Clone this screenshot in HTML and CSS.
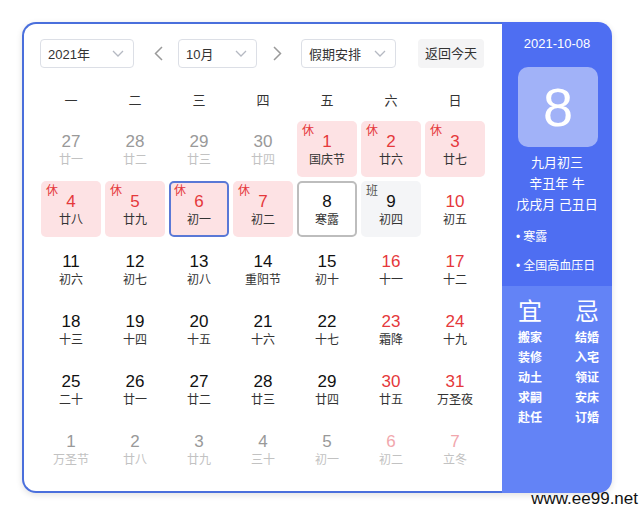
FILE: index.html
```html
<!DOCTYPE html>
<html lang="zh-CN">
<head>
<meta charset="utf-8">
<title>万年历</title>
<link rel="stylesheet" href="styles.css">
</head>
<body>
<div class="page">
  <div class="calendar">
    <div class="main">
      <div class="toolbar">
        <div class="select sel-year"><span>2021年</span><svg class="chev" width="12" height="7" viewBox="0 0 12 7"><polyline points="1,1 6,6 11,1" fill="none" stroke="#b5b9c2" stroke-width="1.3"/></svg></div>
        <div class="arrow arrow-l"><svg width="9" height="15" viewBox="0 0 9 15"><polyline points="8,1 1.5,7.5 8,14" fill="none" stroke="#9a9a9a" stroke-width="1.5"/></svg></div>
        <div class="select sel-month"><span>10月</span><svg class="chev" width="12" height="7" viewBox="0 0 12 7"><polyline points="1,1 6,6 11,1" fill="none" stroke="#b5b9c2" stroke-width="1.3"/></svg></div>
        <div class="arrow arrow-r"><svg width="9" height="15" viewBox="0 0 9 15"><polyline points="1,1 7.5,7.5 1,14" fill="none" stroke="#9a9a9a" stroke-width="1.5"/></svg></div>
        <div class="select sel-hol"><span>假期安排</span><svg class="chev" width="12" height="7" viewBox="0 0 12 7"><polyline points="1,1 6,6 11,1" fill="none" stroke="#b5b9c2" stroke-width="1.3"/></svg></div>
        <div class="today-btn">返回今天</div>
      </div>
      <div class="weekdays">
        <span>一</span><span>二</span><span>三</span><span>四</span><span>五</span><span>六</span><span>日</span>
      </div>
      <div class="grid">
        <div class="cell other"><b>27</b><i>廿一</i></div>
        <div class="cell other"><b>28</b><i>廿二</i></div>
        <div class="cell other"><b>29</b><i>廿三</i></div>
        <div class="cell other"><b>30</b><i>廿四</i></div>
        <div class="cell hol"><em>休</em><b>1</b><i>国庆节</i></div>
        <div class="cell hol"><em>休</em><b>2</b><i>廿六</i></div>
        <div class="cell hol"><em>休</em><b>3</b><i>廿七</i></div>

        <div class="cell hol"><em>休</em><b>4</b><i>廿八</i></div>
        <div class="cell hol"><em>休</em><b>5</b><i>廿九</i></div>
        <div class="cell hol sel"><em>休</em><b>6</b><i>初一</i></div>
        <div class="cell hol"><em>休</em><b>7</b><i>初二</i></div>
        <div class="cell today"><b>8</b><i>寒露</i></div>
        <div class="cell work"><em>班</em><b>9</b><i>初四</i></div>
        <div class="cell wk"><b>10</b><i>初五</i></div>

        <div class="cell"><b>11</b><i>初六</i></div>
        <div class="cell"><b>12</b><i>初七</i></div>
        <div class="cell"><b>13</b><i>初八</i></div>
        <div class="cell"><b>14</b><i>重阳节</i></div>
        <div class="cell"><b>15</b><i>初十</i></div>
        <div class="cell wk"><b>16</b><i>十一</i></div>
        <div class="cell wk"><b>17</b><i>十二</i></div>

        <div class="cell"><b>18</b><i>十三</i></div>
        <div class="cell"><b>19</b><i>十四</i></div>
        <div class="cell"><b>20</b><i>十五</i></div>
        <div class="cell"><b>21</b><i>十六</i></div>
        <div class="cell"><b>22</b><i>十七</i></div>
        <div class="cell wk"><b>23</b><i>霜降</i></div>
        <div class="cell wk"><b>24</b><i>十九</i></div>

        <div class="cell"><b>25</b><i>二十</i></div>
        <div class="cell"><b>26</b><i>廿一</i></div>
        <div class="cell"><b>27</b><i>廿二</i></div>
        <div class="cell"><b>28</b><i>廿三</i></div>
        <div class="cell"><b>29</b><i>廿四</i></div>
        <div class="cell wk"><b>30</b><i>廿五</i></div>
        <div class="cell wk"><b>31</b><i>万圣夜</i></div>

        <div class="cell other"><b>1</b><i>万圣节</i></div>
        <div class="cell other"><b>2</b><i>廿八</i></div>
        <div class="cell other"><b>3</b><i>廿九</i></div>
        <div class="cell other"><b>4</b><i>三十</i></div>
        <div class="cell other"><b>5</b><i>初一</i></div>
        <div class="cell other wk"><b>6</b><i>初二</i></div>
        <div class="cell other wk"><b>7</b><i>立冬</i></div>
      </div>
    </div>
    <div class="panel">
      <div class="panel-top">
        <div class="p-date">2021-10-08</div>
        <div class="p-day">8</div>
        <div class="p-lunar">九月初三</div>
        <div class="p-lunar">辛丑年 牛</div>
        <div class="p-lunar">戊戌月 己丑日</div>
        <ul class="p-events">
          <li>寒露</li>
          <li>全国高血压日</li>
        </ul>
      </div>
      <div class="panel-bottom">
        <div class="yj">
          <div class="yj-col">
            <div class="yj-title">宜</div>
            <div>搬家</div><div>装修</div><div>动土</div><div>求嗣</div><div>赴任</div>
          </div>
          <div class="yj-col">
            <div class="yj-title">忌</div>
            <div>结婚</div><div>入宅</div><div>领证</div><div>安床</div><div>订婚</div>
          </div>
        </div>
      </div>
    </div>
  </div>
  <div class="watermark">www.ee99.net</div>
</div>
</body>
</html>
```

FILE: styles.css
```css
* { box-sizing: border-box; }
html, body { margin: 0; padding: 0; background: #fff; }
body {
  font-family: "Liberation Sans", "Noto Sans CJK SC", sans-serif;
  color: #333;
}
.page {
  position: relative;
  width: 643px;
  height: 511px;
  padding: 22px 0 0 22px;
}
.calendar {
  display: flex;
  width: 590px;
  height: 471px;
  border-radius: 14px;
  box-shadow: 0 2px 6px rgba(0, 0, 0, 0.12);
}
.main {
  width: 480px;
  height: 471px;
  border: 2px solid #4a6fdc;
  border-right: none;
  border-radius: 14px 0 0 14px;
  padding: 15px 0 0 15px;
  background: #fff;
}
.toolbar {
  display: flex;
  align-items: center;
  height: 29px;
  margin-left: 1px;
}
.select {
  display: flex;
  align-items: center;
  justify-content: space-between;
  height: 29px;
  border: 1px solid #dcdfe6;
  border-radius: 4px;
  padding: 0 9px 0 7px;
  font-size: 13px;
  color: #333;
}
.sel-year { width: 94px; }
.sel-month { width: 79px; }
.sel-hol { width: 95px; }
.arrow {
  display: flex;
  align-items: center;
  justify-content: center;
  width: 28px;
  height: 29px;
}
.arrow-l { margin: 0 6px 0 10px; }
.arrow-r { margin: 0 10px 0 6px; }
.today-btn {
  margin-left: 22px;
  width: 66px;
  height: 29px;
  line-height: 29px;
  text-align: center;
  background: #f4f4f5;
  border-radius: 4px;
  font-size: 13px;
  color: #333;
}
.weekdays {
  display: grid;
  grid-template-columns: repeat(7, 64px);
  margin-top: 15px;
  height: 36px;
  line-height: 36px;
  text-align: center;
  font-size: 13px;
  color: #333;
}
.grid {
  display: grid;
  grid-template-columns: repeat(7, 64px);
  grid-auto-rows: 60px;
}
.cell {
  position: relative;
  margin: 2px;
  border-radius: 5px;
  padding-top: 11px;
  display: flex;
  flex-direction: column;
  align-items: center;
}
.cell b {
  font-weight: normal;
  font-size: 17px;
  line-height: 20px;
  color: #111;
}
.cell i {
  font-style: normal;
  font-size: 12px;
  line-height: 16px;
  color: #333;
}
.cell em {
  position: absolute;
  top: 2px;
  left: 5px;
  font-style: normal;
  font-size: 12px;
  line-height: 16px;
}
.cell.wk b { color: #e5383b; }
.cell.other b { color: #999; }
.cell.other i { color: #c2c2c2; }
.cell.other.wk b { color: #f1a7ad; }
.cell.hol { background: #fde2e4; }
.cell.hol b { color: #e5383b; }
.cell.hol em { color: #e5383b; }
.cell.sel {
  border: 2px solid #5a78d6;
  padding-top: 9px;
}
.cell.sel em { top: 0; left: 3px; }
.cell.today {
  border: 2px solid #bdbdbd;
  padding-top: 9px;
}
.cell.work { background: #f4f5f7; }
.cell.work em { color: #555; }

.panel {
  width: 110px;
  height: 471px;
  border-radius: 0 14px 14px 0;
  overflow: hidden;
  display: flex;
  flex-direction: column;
  color: #fff;
}
.panel-top {
  background: #4e6ef2;
  height: 264px;
  padding-top: 14px;
  display: flex;
  flex-direction: column;
  align-items: center;
}
.p-date {
  font-size: 13px;
  line-height: 16px;
}
.p-day {
  margin-top: 15px;
  width: 80px;
  height: 80px;
  border-radius: 10px;
  background: rgba(255, 255, 255, 0.47);
  font-size: 54px;
  line-height: 80px;
  text-align: center;
  margin-left: 2px;
}
.p-lunar {
  font-size: 13px;
  line-height: 21px;
}
.p-day + .p-lunar { margin-top: 5px; }
.p-events {
  list-style: none;
  margin: 12px 0 0 0;
  padding: 0 0 0 14px;
  align-self: stretch;
  font-size: 12px;
}
.p-events li {
  line-height: 20px;
  margin-bottom: 9px;
}
.p-events li::before {
  content: "•";
  margin-right: 3px;
}
.panel-bottom {
  flex: 1;
  background: #6383f6;
  padding-top: 12px;
}
.yj {
  display: flex;
  padding-left: 12px;
  gap: 25px;
}
.yj-col {
  width: 32px;
  text-align: center;
  font-size: 12px;
  line-height: 20px;
  font-weight: 600;
}
.yj-title {
  font-size: 24px;
  line-height: 28px;
  font-weight: normal;
  margin-bottom: 2px;
}
.watermark {
  position: absolute;
  right: 5px;
  top: 489px;
  font-size: 17px;
  line-height: 20px;
  color: #111;
}
```
